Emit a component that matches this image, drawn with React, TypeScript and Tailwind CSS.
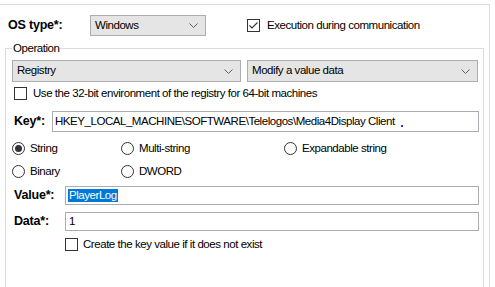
import React from "react";

const font = { fontFamily: '"Liberation Sans", Arial, sans-serif' };

function Chevron() {
  return (
    <svg width="9" height="5" viewBox="0 0 9 5" className="shrink-0">
      <polyline points="0.5,0.5 4.5,4.5 8.5,0.5" fill="none" stroke="#606060" strokeWidth="1" />
    </svg>
  );
}

function Select({ value, className }: { value: string; className: string }) {
  return (
    <div
      className={
        "flex items-center justify-between border border-[#adadad] bg-[#e5e5e5] pl-[4px] pr-[7px] text-[11.5px] tracking-[-0.45px] text-black " +
        className
      }
    >
      <span>{value}</span>
      <Chevron />
    </div>
  );
}

function Checkbox({ checked }: { checked?: boolean }) {
  return (
    <div className="flex h-[13px] w-[13px] shrink-0 items-center justify-center border border-[#333333] bg-white">
      {checked && (
        <svg width="11" height="11" viewBox="0 0 11 11">
          <polyline points="1.5,5.5 4,8 9.5,2.5" fill="none" stroke="#333333" strokeWidth="1.1" />
        </svg>
      )}
    </div>
  );
}

function Radio({ checked }: { checked?: boolean }) {
  return (
    <div className="flex h-[13px] w-[13px] shrink-0 items-center justify-center rounded-full border border-[#333333] bg-white">
      {checked && <div className="h-[7px] w-[7px] rounded-full bg-[#333333]" />}
    </div>
  );
}

function Input({ children, className }: { children?: React.ReactNode; className: string }) {
  return (
    <div
      className={
        "flex items-center border border-[#abadb3] bg-white pl-[2px] text-[11.5px] tracking-[-0.45px] text-black " +
        className
      }
    >
      {children}
    </div>
  );
}

const txt = "text-[11.5px] tracking-[-0.45px] text-black";

export default function App() {
  return (
    <div className="h-[287px] w-[495px] overflow-hidden bg-white pt-[4px]" style={font}>
      <div className="h-[300px] w-[490px] border-r border-t border-[#dcdcdc]">
        <div className="mt-[10px] flex h-[21px] items-center">
          <div className="w-[90px] pl-[8px] text-[12.5px] font-bold tracking-[-0.2px] text-black">OS type*:</div>
          <Select value="Windows" className="h-[21px] w-[116px]" />
          <div className="ml-[41px] flex items-center gap-[7px]">
            <Checkbox checked />
            <span className={txt}>Execution during communication</span>
          </div>
        </div>

        <div className="relative ml-[5px] mt-[12px] h-[260px] w-[479px] border border-[#dcdcdc]">
          <div className="absolute left-[6px] top-[-8px] bg-white px-[1px] text-[11.5px] leading-[14px] tracking-[-0.45px] text-black">
            Operation
          </div>

          <div className="ml-[6px] mt-[11px] flex gap-[6px]">
            <Select value="Registry" className="h-[22px] w-[229px]" />
            <Select value="Modify a value data" className="h-[22px] w-[231px]" />
          </div>

          <div className="ml-[8px] mt-[5px] flex h-[13px] items-center gap-[6px]">
            <Checkbox />
            <span className={txt}>Use the 32-bit environment of the registry for 64-bit machines</span>
          </div>

          <div className="ml-[8px] mt-[11px] flex h-[21px] items-center">
            <div className="w-[38px] text-[12.5px] font-bold tracking-[-0.2px] text-black">Key*:</div>
            <Input className="h-[21px] w-[427px]">
              <span>HKEY_LOCAL_MACHINE\SOFTWARE\Telelogos\Media4Display Client</span>
              <span className="ml-[6px] mt-[8px] h-[2px] w-[2px] bg-[#3030e0]" />
            </Input>
          </div>

          <div className="ml-[6px] mt-[10px] flex h-[13px] items-center">
            <div className="flex w-[109px] items-center gap-[5px]">
              <Radio checked />
              <span className={txt}>String</span>
            </div>
            <div className="flex w-[163px] items-center gap-[5px]">
              <Radio />
              <span className={txt}>Multi-string</span>
            </div>
            <div className="flex items-center gap-[5px]">
              <Radio />
              <span className={txt}>Expandable string</span>
            </div>
          </div>

          <div className="ml-[6px] mt-[10px] flex h-[13px] items-center">
            <div className="flex w-[109px] items-center gap-[5px]">
              <Radio />
              <span className={txt}>Binary</span>
            </div>
            <div className="flex items-center gap-[5px]">
              <Radio />
              <span className={txt}>DWORD</span>
            </div>
          </div>

          <div className="ml-[8px] mt-[8px] flex h-[19px] items-center">
            <div className="w-[51px] text-[12.5px] font-bold tracking-[-0.2px] text-black">Value*:</div>
            <Input className="h-[19px] w-[414px]">
              <span className="bg-[#0078d7] px-[1px] leading-[13px] text-white">PlayerLog</span>
            </Input>
          </div>

          <div className="ml-[8px] mt-[7px] flex h-[19px] items-center">
            <div className="w-[51px] text-[12.5px] font-bold tracking-[-0.2px] text-black">Data*:</div>
            <Input className="h-[19px] w-[414px]">
              <span className="pl-[1px]">1</span>
            </Input>
          </div>

          <div className="ml-[59px] mt-[7px] flex h-[13px] items-center gap-[5px]">
            <Checkbox />
            <span className={txt}>Create the key value if it does not exist</span>
          </div>
        </div>
      </div>
    </div>
  );
}
